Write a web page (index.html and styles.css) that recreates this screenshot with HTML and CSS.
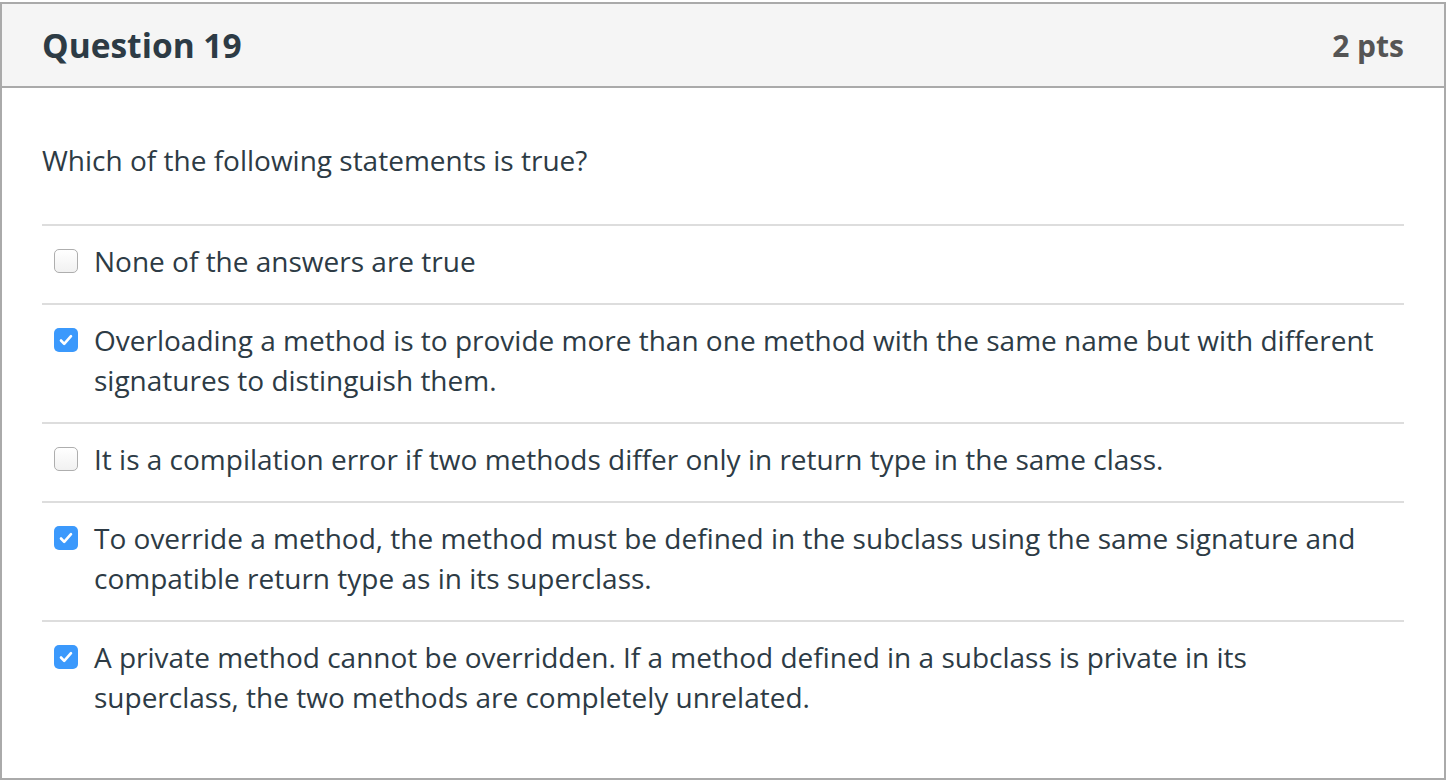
FILE: index.html
```html
<!DOCTYPE html>
<html>
<head>
<meta charset="utf-8">
<link rel="stylesheet" href="styles.css">
</head>
<body>
<div class="question">
  <div class="header">
    <h2 class="title">Question 19</h2>
    <div class="pts">2 pts</div>
  </div>
  <div class="body">
    <p class="prompt">Which of the following statements is true?</p>
    <ul class="answers">
      <li class="answer"><span class="cb"></span><span class="label">None of the answers are true</span></li>
      <li class="answer"><span class="cb checked"><svg viewBox="0 0 24 24" width="24" height="24"><path d="M7 12.5l3.2 3.4L17 8.2" fill="none" stroke="#fff" stroke-width="2.6" stroke-linecap="round" stroke-linejoin="round"/></svg></span><span class="label">Overloading a method is to provide more than one method with the same name but with different signatures to distinguish them.</span></li>
      <li class="answer"><span class="cb"></span><span class="label">It is a compilation error if two methods differ only in return type in the same class.</span></li>
      <li class="answer"><span class="cb checked"><svg viewBox="0 0 24 24" width="24" height="24"><path d="M7 12.5l3.2 3.4L17 8.2" fill="none" stroke="#fff" stroke-width="2.6" stroke-linecap="round" stroke-linejoin="round"/></svg></span><span class="label">To override a method, the method must be defined in the subclass using the same signature and compatible return type as in its superclass.</span></li>
      <li class="answer"><span class="cb checked"><svg viewBox="0 0 24 24" width="24" height="24"><path d="M7 12.5l3.2 3.4L17 8.2" fill="none" stroke="#fff" stroke-width="2.6" stroke-linecap="round" stroke-linejoin="round"/></svg></span><span class="label">A private method cannot be overridden. If a method defined in a subclass is private in its superclass, the two methods are completely unrelated.</span></li>
    </ul>
  </div>
</div>
</body>
</html>
```

FILE: styles.css
```css
html, body {
  margin: 0;
  padding: 0;
  background: #fff;
}
body {
  font-family: "Open Sans", "Liberation Sans", sans-serif;
  color: #2d3b45;
  padding-top: 2px;
}
.question {
  box-sizing: border-box;
  width: 1446px;
  height: 778px;
  border: 2px solid #aaaaaa;
  background: #fff;
}
.header {
  display: flex;
  align-items: center;
  justify-content: space-between;
  height: 82px;
  padding: 0 40px;
  background: #f5f5f5;
  border-bottom: 2px solid #aaaaaa;
}
.title {
  margin: 0;
  font-size: 33.5px;
  font-weight: 700;
  color: #2d3b45;
}
.pts {
  font-size: 30px;
  font-weight: 700;
  color: #555555;
}
.body {
  padding: 0 40px;
}
.prompt {
  margin: 0;
  padding: 52px 0 44px;
  font-size: 28px;
  line-height: 40px;
  border-bottom: 2px solid #dddddd;
}
.answers {
  list-style: none;
  margin: 0;
  padding: 0;
}
.answer {
  display: flex;
  align-items: flex-start;
  padding: 15px 0 22px 12px;
  font-size: 28px;
  line-height: 40px;
  border-bottom: 2px solid #dddddd;
}
.answer:last-child {
  border-bottom: none;
}
.cb {
  flex: none;
  box-sizing: border-box;
  width: 24px;
  height: 24px;
  margin-top: 8px;
  margin-right: 16px;
  border: 1.5px solid #aeaeae;
  border-radius: 5px;
  background: linear-gradient(#ffffff, #f1f1f1);
  display: flex;
  align-items: center;
  justify-content: center;
}
.cb.checked {
  border: none;
  background: #3b99fc;
}
.cb svg {
  display: block;
}
.label {
  flex: 1;
  padding-right: 14px;
}
```
